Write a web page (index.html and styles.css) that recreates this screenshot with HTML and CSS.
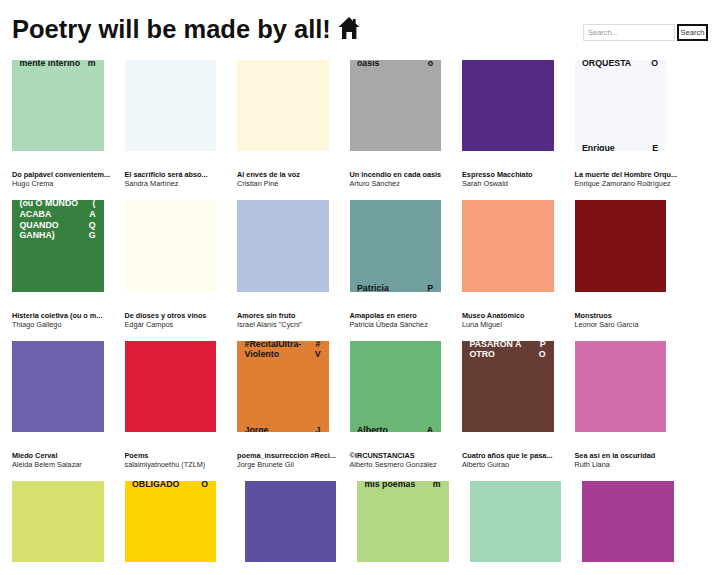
FILE: index.html
```html
<!DOCTYPE html>
<html lang="en">
<head>
    <meta charset="UTF-8">
    <meta name="viewport" content="width=device-width, initial-scale=1.0">
    <title>Poetry will be made by all!</title>
    <link rel="stylesheet" href="styles.css">
</head>
<body>
    <header class="top">
        <h1>Poetry will be made by all!
            <svg class="home" viewBox="0 0 20 22" aria-hidden="true">
                <path d="M10 0 L14 3.9 L14 2 L16.6 2 L16.6 6.4 L20.4 10 L17.4 10 L17.4 22 L13 22 L13 15 L7.4 15 L7.4 22 L3 22 L3 10 L-0.4 10 Z"/>
            </svg>
        </h1>
        <form class="search">
            <input type="text" placeholder="Search...">
            <button type="button">Search</button>
        </form>
    </header>

    <main class="books">
        <article class="book">
            <div class="cover c-mint">
                <div class="cover-line cut-top"><span>mente interino</span><span>m</span></div>
            </div>
            <p class="name">Do palpável convenientem...</p>
            <p class="author">Hugo Crema</p>
        </article>
        <article class="book">
            <div class="cover c-ice"></div>
            <p class="name">El sacrificio será abso...</p>
            <p class="author">Sandra Martínez</p>
        </article>
        <article class="book">
            <div class="cover c-cream"></div>
            <p class="name">Al envés de la voz</p>
            <p class="author">Cristian Piné</p>
        </article>
        <article class="book">
            <div class="cover c-grey">
                <div class="cover-line cut-top"><span>oasis</span><span>o</span></div>
            </div>
            <p class="name">Un incendio en cada oasis</p>
            <p class="author">Arturo Sánchez</p>
        </article>
        <article class="book">
            <div class="cover c-purple"></div>
            <p class="name">Espresso Macchiato</p>
            <p class="author">Sarah Oswald</p>
        </article>
        <article class="book">
            <div class="cover c-snow">
                <div class="cover-line cut-top"><span>ORQUESTA</span><span>O</span></div>
                <div class="cover-line flush-bottom"><span>Enrique</span><span>E</span></div>
            </div>
            <p class="name">La muerte del Hombre Orqu...</p>
            <p class="author">Enrique Zamorano Rodríguez</p>
        </article>

        <article class="book">
            <div class="cover c-green light">
                <div class="cover-line cut-top"><span>(ou O MUNDO</span><span>(</span></div>
                <div class="cover-line"><span>ACABA</span><span>A</span></div>
                <div class="cover-line"><span>QUANDO</span><span>Q</span></div>
                <div class="cover-line"><span>GANHA)</span><span>G</span></div>
            </div>
            <p class="name">Histeria coletiva (ou o m...</p>
            <p class="author">Thiago Gallego</p>
        </article>
        <article class="book">
            <div class="cover c-ivory"></div>
            <p class="name">De dioses y otros vinos</p>
            <p class="author">Edgar Campos</p>
        </article>
        <article class="book">
            <div class="cover c-blue"></div>
            <p class="name">Amores sin fruto</p>
            <p class="author">Israel Alanís "Cycni"</p>
        </article>
        <article class="book">
            <div class="cover c-teal">
                <div class="cover-line flush-bottom"><span>Patricia</span><span>P</span></div>
            </div>
            <p class="name">Amapolas en enero</p>
            <p class="author">Patricia Úbeda Sánchez</p>
        </article>
        <article class="book">
            <div class="cover c-salmon"></div>
            <p class="name">Museo Anatómico</p>
            <p class="author">Luna Miguel</p>
        </article>
        <article class="book">
            <div class="cover c-maroon"></div>
            <p class="name">Monstruos</p>
            <p class="author">Leonor Saro García</p>
        </article>

        <article class="book">
            <div class="cover c-violet"></div>
            <p class="name">Miedo Cerval</p>
            <p class="author">Aleida Belem Salazar</p>
        </article>
        <article class="book">
            <div class="cover c-red"></div>
            <p class="name">Poems</p>
            <p class="author">salaimiyatnoethu (TZLM)</p>
        </article>
        <article class="book">
            <div class="cover c-orange">
                <div class="cover-line cut-top"><span>#RecitalUltra-</span><span>#</span></div>
                <div class="cover-line"><span>Violento</span><span>V</span></div>
                <div class="cover-line cut-bottom"><span>Jorge</span><span>J</span></div>
            </div>
            <p class="name">poema_insurrección #Reci...</p>
            <p class="author">Jorge Brunete Gil</p>
        </article>
        <article class="book">
            <div class="cover c-leaf">
                <div class="cover-line cut-bottom"><span>Alberto</span><span>A</span></div>
            </div>
            <p class="name">©IRCUNSTANCIAS</p>
            <p class="author">Alberto Sesmero González</p>
        </article>
        <article class="book">
            <div class="cover c-brown light">
                <div class="cover-line cut-top"><span>PASARON A</span><span>P</span></div>
                <div class="cover-line"><span>OTRO</span><span>O</span></div>
            </div>
            <p class="name">Cuatro años que le pasa...</p>
            <p class="author">Alberto Guirao</p>
        </article>
        <article class="book">
            <div class="cover c-pink"></div>
            <p class="name">Sea así en la oscuridad</p>
            <p class="author">Ruth Llana</p>
        </article>

        <article class="book last">
            <div class="cover c-lime"></div>
        </article>
        <article class="book last">
            <div class="cover c-yellow">
                <div class="cover-line cut-top"><span>OBLIGADO</span><span>O</span></div>
            </div>
        </article>
        <article class="book last shifted">
            <div class="cover c-indigo"></div>
        </article>
        <article class="book last shifted">
            <div class="cover c-moss">
                <div class="cover-line cut-top"><span>mis poemas</span><span>m</span></div>
            </div>
        </article>
        <article class="book last shifted">
            <div class="cover c-aqua"></div>
        </article>
        <article class="book last shifted">
            <div class="cover c-magenta"></div>
        </article>
    </main>
</body>
</html>
```

FILE: styles.css
```css
body {
    font-family: 'Liberation Sans', Arial, sans-serif;
    background-color: #fff;
    color: #111;
    margin: 0;
    padding: 0 12px;
}
.top {
    display: flex;
    justify-content: space-between;
    height: 60px;
}
h1 {
    font-size: 25.5px;
    line-height: 31px;
    margin: 14px 0 0;
    display: flex;
    align-items: flex-start;
    gap: 8px;
    white-space: nowrap;
}
.home {
    width: 20px;
    height: 22px;
    margin-top: 3px;
    fill: #111;
    overflow: visible;
}
.search {
    display: flex;
    gap: 2px;
    height: 17px;
    margin: 24px 0 0;
}
.search input {
    box-sizing: border-box;
    width: 92px;
    height: 17px;
    padding: 0 4px;
    border: 1px solid #ddd;
    font-family: inherit;
    font-size: 7.5px;
}
.search input::placeholder {
    color: #999;
}
.search button {
    box-sizing: border-box;
    width: 31px;
    height: 17px;
    padding: 0;
    background-color: #fff;
    border: 2px solid #111;
    font-family: inherit;
    font-size: 7.5px;
    color: #333;
}
.books {
    display: grid;
    grid-template-columns: repeat(6, 91.5px);
    grid-template-rows: repeat(3, 140.3px) 81px;
    column-gap: 21px;
}
.book {
    min-width: 0;
}
.cover {
    box-sizing: border-box;
    width: 91.5px;
    height: 91.3px;
    padding: 0 8px 0 7.5px;
    display: flex;
    flex-direction: column;
    overflow: hidden;
    font-size: 8.8px;
    font-weight: bold;
    line-height: 10.7px;
}
.light {
    color: #fff;
}
.cover-line {
    display: flex;
    justify-content: space-between;
    flex-shrink: 0;
}
.cut-top {
    margin-top: -2px;
}
.cut-bottom {
    margin-top: auto;
    margin-bottom: -3.4px;
}
.flush-bottom {
    margin-top: auto;
    margin-bottom: -2.4px;
}
.name,
.author {
    margin: 0;
    font-size: 7.3px;
    line-height: 9px;
    white-space: nowrap;
}
.name {
    margin-top: 19px;
    font-weight: bold;
}
.author {
    color: #2b2b2b;
}
.last .cover {
    height: 81px;
}
.shifted {
    margin-left: 7.5px;
}

.c-mint { background-color: #acd9b8; }
.c-ice { background-color: #eff7fa; }
.c-cream { background-color: #fff7dc; }
.c-grey { background-color: #a8a8a8; }
.c-purple { background-color: #552a82; }
.c-snow { background-color: #f6f7fa; }
.c-green { background-color: #38803f; }
.c-ivory { background-color: #fffdee; }
.c-blue { background-color: #b3c3de; }
.c-teal { background-color: #719e9e; }
.c-salmon { background-color: #f8a07e; }
.c-maroon { background-color: #7d1012; }
.c-violet { background-color: #6c63ac; }
.c-red { background-color: #df1b3a; }
.c-orange { background-color: #df7f33; }
.c-leaf { background-color: #6cb675; }
.c-brown { background-color: #673c34; }
.c-pink { background-color: #d46dab; }
.c-lime { background-color: #d5e06f; }
.c-yellow { background-color: #fdd300; }
.c-indigo { background-color: #5d519f; }
.c-moss { background-color: #b2d885; }
.c-aqua { background-color: #a2d6b8; }
.c-magenta { background-color: #a73c93; }
```
